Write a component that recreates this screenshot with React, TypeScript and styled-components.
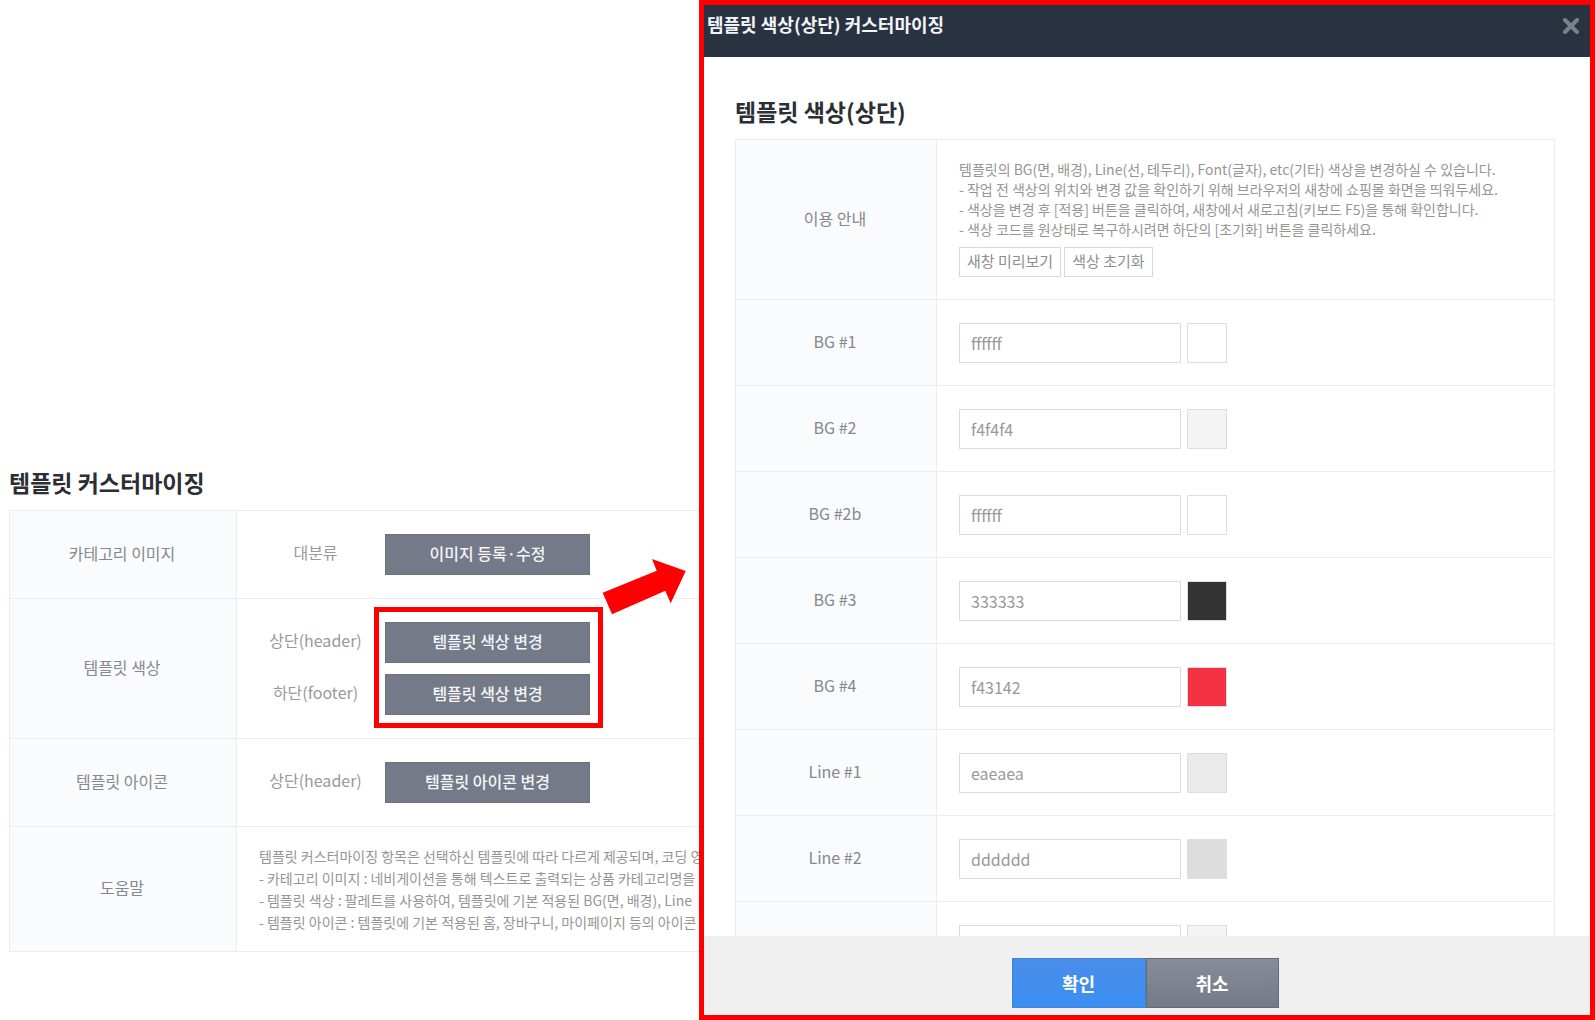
import React from "react";
import styled, { createGlobalStyle } from "styled-components";

const GlobalStyle = createGlobalStyle`
  *, *::before, *::after { box-sizing: border-box; }
  body {
    margin: 0;
    background: #fff;
    color: #8f8f8f;
    font-family: "Noto Sans CJK KR", sans-serif;
    font-size: 16px;
    line-height: 24px;
  }
  button, input { font: inherit; }
`;

const Page = styled.div`
  display: grid;
  grid-template-columns: minmax(0, 699fr) minmax(0, 896fr);
  height: 100vh;
`;

const Customizing = styled.main`
  display: flex;
  flex-direction: column;
  justify-content: flex-end;
  padding: 0 0 68px 9px;
  overflow: hidden;
`;

const SectionTitle = styled.h2`
  margin: 0 0 11px;
  color: #2b2e33;
  font-size: 23px;
  font-weight: 700;
  line-height: 34px;
`;

const Sheet = styled.table<{ $closed?: boolean }>`
  width: 100%;
  table-layout: fixed;
  border-collapse: separate;
  border-spacing: 0;
  border: solid #ededef;
  border-width: 1px ${(p) => (p.$closed ? "1px" : "0")} 0 1px;
`;

const Row = styled.tr<{ $height: number }>`
  height: ${(p) => p.$height}px;
`;

const Name = styled.th<{ $width: number }>`
  width: ${(p) => p.$width}px;
  padding: 0 2px 4px 0;
  border: solid #ededef;
  border-width: 0 1px 1px 0;
  background: #f9fbfd;
  color: #85888e;
  font-weight: 400;
`;

const Cell = styled.td`
  padding: 0 22px;
  border-bottom: 1px solid #ededef;
  white-space: nowrap;
`;

const Options = styled.div`
  display: flex;
  gap: 13px;
`;

const Stack = styled.div`
  position: relative;
  display: flex;
  flex-direction: column;
  gap: 11px;
`;

const OptionName = styled.span`
  width: 113px;
  height: 41px;
  line-height: 37px;
  text-align: center;
  color: #999;
`;

const ActionButton = styled.button`
  width: 205px;
  height: 41px;
  padding: 0 0 4px;
  border: 1px solid #6c727f;
  background: #747a87;
  color: #f4f5f8;
  font-weight: 500;
  line-height: 24px;
`;

const Highlight = styled.div`
  position: absolute;
  inset: -15px -13px -13px -11px;
  border: 5px solid #f00;
  pointer-events: none;
`;

const Arrow = styled.svg`
  position: absolute;
  left: 217px;
  top: -63px;
`;

const Notes = styled.p<{ $line: number }>`
  margin: 0;
  color: #959595;
  font-size: 14px;
  line-height: ${(p) => p.$line}px;
`;

const Dialog = styled.section`
  display: flex;
  flex-direction: column;
  min-height: 0;
  border: 5px solid #f00;
  background: #fff;
`;

const DialogHeader = styled.header`
  display: flex;
  align-items: flex-start;
  justify-content: space-between;
  height: 52px;
  padding: 7px 11px 0 3px;
  background: #293241;
`;

const DialogTitle = styled.h1`
  margin: 0;
  color: #f2f4f7;
  font-size: 18px;
  font-weight: 700;
  line-height: 24px;
`;

const CloseButton = styled.button`
  display: flex;
  padding: 6px 0;
  border: 0;
  background: none;
  color: #7a808a;
`;

const DialogBody = styled.div`
  flex: 1;
  min-height: 0;
  padding: 37px 35px 0 31px;
  overflow: hidden;
`;

const SmallButtons = styled.div`
  display: flex;
  gap: 3px;
  margin-top: 8px;
  margin-bottom: 4px;
`;

const SmallButton = styled.button`
  height: 30px;
  padding: 0 7px 2px;
  border: 1px solid #d6d8da;
  background: #fff;
  color: #8f8f8f;
  font-size: 15px;
  line-height: 24px;
`;

const ColorField = styled.div`
  display: flex;
  gap: 6px;
`;

const HexInput = styled.input`
  width: 222px;
  height: 40px;
  padding: 0 11px;
  border: 1px solid #d9dbdd;
  background: #fff;
  color: #999;
`;

const Swatch = styled.button<{ $color: string }>`
  width: 40px;
  height: 40px;
  padding: 0;
  border: 1px solid #dcdee0;
  background: ${(p) => p.$color};
`;

const DialogFooter = styled.footer`
  display: flex;
  justify-content: center;
  height: 79px;
  padding: 22px 4px 0 0;
  background: #f0f0f0;
`;

const FooterButton = styled.button<{ $primary?: boolean }>`
  width: ${(p) => (p.$primary ? 134 : 133)}px;
  height: 50px;
  padding: 0;
  border: 1px solid ${(p) => (p.$primary ? "#3f82d8" : "#656b77")};
  background: ${(p) =>
    p.$primary
      ? "linear-gradient(#4a8de8, #3a8ff2)"
      : "linear-gradient(#878c98, #747a86)"};
  color: #fff;
  font-size: 18px;
  font-weight: 700;
`;

const colors = [
  { name: "BG #1", value: "ffffff" },
  { name: "BG #2", value: "f4f4f4" },
  { name: "BG #2b", value: "ffffff" },
  { name: "BG #3", value: "333333" },
  { name: "BG #4", value: "f43142" },
  { name: "Line #1", value: "eaeaea" },
  { name: "Line #2", value: "dddddd" },
  { name: "", value: "", swatch: "#f4f4f4" },
];

export default function App() {
  return (
    <>
      <GlobalStyle />
      <Page>
        <Customizing>
          <SectionTitle>템플릿 커스터마이징</SectionTitle>
          <Sheet>
            <tbody>
              <Row $height={88}>
                <Name scope="row" $width={227}>카테고리 이미지</Name>
                <Cell>
                  <Options>
                    <OptionName>대분류</OptionName>
                    <ActionButton type="button">이미지 등록·수정</ActionButton>
                  </Options>
                </Cell>
              </Row>
              <Row $height={140}>
                <Name scope="row" $width={227}>템플릿 색상</Name>
                <Cell>
                  <Options>
                    <Stack>
                      <OptionName>상단(header)</OptionName>
                      <OptionName>하단(footer)</OptionName>
                    </Stack>
                    <Stack>
                      <ActionButton type="button">템플릿 색상 변경</ActionButton>
                      <ActionButton type="button">템플릿 색상 변경</ActionButton>
                      <Highlight />
                      <Arrow width="84" height="56" viewBox="0 0 84 56" aria-hidden="true">
                        <path d="M.7 33.7 54.7 11.7 50 0 83.7 12 68.7 44.3 63.3 31.7 10 55.3Z" fill="#f00" />
                      </Arrow>
                    </Stack>
                  </Options>
                </Cell>
              </Row>
              <Row $height={88}>
                <Name scope="row" $width={227}>템플릿 아이콘</Name>
                <Cell>
                  <Options>
                    <OptionName>상단(header)</OptionName>
                    <ActionButton type="button">템플릿 아이콘 변경</ActionButton>
                  </Options>
                </Cell>
              </Row>
              <Row $height={125}>
                <Name scope="row" $width={227}>도움말</Name>
                <Cell>
                  <Notes $line={22}>
                    템플릿 커스터마이징 항목은 선택하신 템플릿에 따라 다르게 제공되며, 코딩 영
                    <br />- 카테고리 이미지 : 네비게이션을 통해 텍스트로 출력되는 상품 카테고리명을
                    <br />- 템플릿 색상 : 팔레트를 사용하여, 템플릿에 기본 적용된 BG(면, 배경), Line
                    <br />- 템플릿 아이콘 : 템플릿에 기본 적용된 홈, 장바구니, 마이페이지 등의 아이콘
                  </Notes>
                </Cell>
              </Row>
            </tbody>
          </Sheet>
        </Customizing>

        <Dialog role="dialog" aria-labelledby="dialog-title">
          <DialogHeader>
            <DialogTitle id="dialog-title">템플릿 색상(상단) 커스터마이징</DialogTitle>
            <CloseButton type="button" aria-label="닫기">
              <svg width="16" height="16" viewBox="0 0 16 16" aria-hidden="true">
                <path d="M2 2 14 14M14 2 2 14" stroke="currentColor" strokeWidth="4" strokeLinecap="round" />
              </svg>
            </CloseButton>
          </DialogHeader>
          <DialogBody>
            <SectionTitle>템플릿 색상(상단)</SectionTitle>
            <Sheet $closed>
              <tbody>
                <Row $height={160}>
                  <Name scope="row" $width={201}>이용 안내</Name>
                  <Cell>
                    <Notes $line={20}>
                      템플릿의 BG(면, 배경), Line(선, 테두리), Font(글자), etc(기타) 색상을 변경하실 수 있습니다.
                      <br />- 작업 전 색상의 위치와 변경 값을 확인하기 위해 브라우저의 새창에 쇼핑몰 화면을 띄워두세요.
                      <br />- 색상을 변경 후 [적용] 버튼을 클릭하여, 새창에서 새로고침(키보드 F5)을 통해 확인합니다.
                      <br />- 색상 코드를 원상태로 복구하시려면 하단의 [초기화] 버튼을 클릭하세요.
                    </Notes>
                    <SmallButtons>
                      <SmallButton type="button">새창 미리보기</SmallButton>
                      <SmallButton type="button">색상 초기화</SmallButton>
                    </SmallButtons>
                  </Cell>
                </Row>
                {colors.map((c, i) => (
                  <Row key={i} $height={86}>
                    <Name scope="row" $width={201}>
                      <label htmlFor={`color-${i}`}>{c.name}</label>
                    </Name>
                    <Cell>
                      <ColorField>
                        <HexInput id={`color-${i}`} type="text" defaultValue={c.value} />
                        <Swatch
                          type="button"
                          aria-label={`${c.name} 색상`}
                          $color={c.swatch ?? `#${c.value}`}
                        />
                      </ColorField>
                    </Cell>
                  </Row>
                ))}
              </tbody>
            </Sheet>
          </DialogBody>
          <DialogFooter>
            <FooterButton type="button" $primary>확인</FooterButton>
            <FooterButton type="button">취소</FooterButton>
          </DialogFooter>
        </Dialog>
      </Page>
    </>
  );
}
